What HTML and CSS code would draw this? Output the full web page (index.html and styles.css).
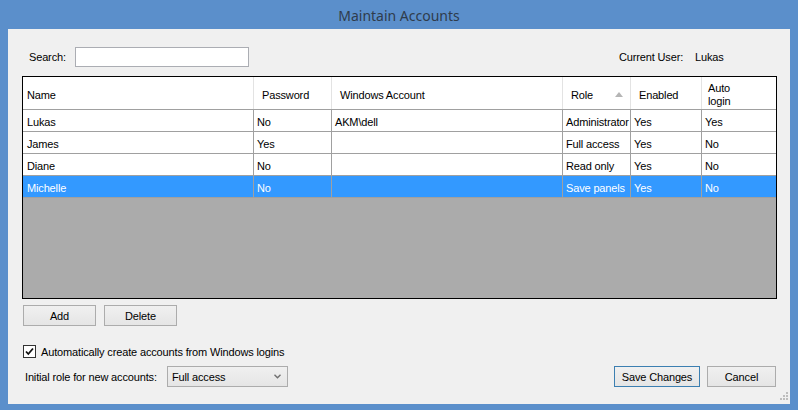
FILE: index.html
```html
<!DOCTYPE html>
<html>
<head>
<meta charset="utf-8">
<link rel="stylesheet" href="styles.css">
</head>
<body>
<div class="window">
  <div class="titlebar">Maintain Accounts</div>
  <div class="client">
    <div class="top-row">
      <span class="search-label">Search:</span>
      <input class="search-input" type="text">
      <span class="user-label">Current User:</span>
      <span class="user-name">Lukas</span>
    </div>
    <div class="grid">
      <div class="row head">
        <div class="cell c-name">Name</div>
        <div class="cell c-pass">Password</div>
        <div class="cell c-win">Windows Account</div>
        <div class="cell c-role">Role<svg class="sort" width="8" height="5" viewBox="0 0 8 5"><path d="M0 5 L4 0 L8 5 Z" fill="#b5b5b5"/></svg></div>
        <div class="cell c-en">Enabled</div>
        <div class="cell c-auto">Auto<br>login</div>
      </div>
      <div class="row">
        <div class="cell c-name">Lukas</div>
        <div class="cell c-pass">No</div>
        <div class="cell c-win">AKM\dell</div>
        <div class="cell c-role">Administrator</div>
        <div class="cell c-en">Yes</div>
        <div class="cell c-auto">Yes</div>
      </div>
      <div class="row">
        <div class="cell c-name">James</div>
        <div class="cell c-pass">Yes</div>
        <div class="cell c-win"></div>
        <div class="cell c-role">Full access</div>
        <div class="cell c-en">Yes</div>
        <div class="cell c-auto">No</div>
      </div>
      <div class="row">
        <div class="cell c-name">Diane</div>
        <div class="cell c-pass">No</div>
        <div class="cell c-win"></div>
        <div class="cell c-role">Read only</div>
        <div class="cell c-en">Yes</div>
        <div class="cell c-auto">No</div>
      </div>
      <div class="row selected">
        <div class="cell c-name">Michelle</div>
        <div class="cell c-pass">No</div>
        <div class="cell c-win"></div>
        <div class="cell c-role">Save panels</div>
        <div class="cell c-en">Yes</div>
        <div class="cell c-auto">No</div>
      </div>
    </div>
    <div class="btn-row">
      <button class="btn btn-add">Add</button>
      <button class="btn btn-del">Delete</button>
    </div>
    <div class="check-row">
      <span class="checkbox"><svg width="11" height="11" viewBox="0 0 11 11"><path d="M2 5.5 L4.3 8 L9 2.5" fill="none" stroke="#111" stroke-width="1.8"/></svg></span>
      <span class="check-label">Automatically create accounts from Windows logins</span>
    </div>
    <div class="bottom-row">
      <span class="role-label">Initial role for new accounts:</span>
      <div class="combo"><span>Full access</span><svg width="7" height="5" viewBox="0 0 7 5"><path d="M0.5 0.8 L3.5 3.8 L6.5 0.8" fill="none" stroke="#707070" stroke-width="1.4"/></svg></div>
      <button class="btn btn-save">Save Changes</button>
      <button class="btn btn-cancel">Cancel</button>
    </div>
    <svg class="grip" width="10" height="10" viewBox="0 0 10 10">
      <rect x="8" y="0" width="2" height="2" fill="#bdbdbd"/>
      <rect x="5" y="3" width="2" height="2" fill="#bdbdbd"/>
      <rect x="8" y="3" width="2" height="2" fill="#bdbdbd"/>
      <rect x="2" y="6" width="2" height="2" fill="#bdbdbd"/>
      <rect x="5" y="6" width="2" height="2" fill="#bdbdbd"/>
      <rect x="8" y="6" width="2" height="2" fill="#bdbdbd"/>
    </svg>
  </div>
</div>
</body>
</html>
```

FILE: styles.css
```css
* { box-sizing: border-box; }
html, body { margin: 0; padding: 0; }
body {
  width: 798px;
  height: 410px;
  background: #5b8fcb;
  font-family: "Liberation Sans", Arial, sans-serif;
  font-size: 11px;
  letter-spacing: -0.15px;
  color: #000;
  overflow: hidden;
}
.window { width: 798px; height: 410px; display: flex; flex-direction: column; }
.titlebar {
  height: 29px;
  display: flex;
  align-items: center;
  justify-content: center;
  font-family: "Noto Sans", "Open Sans", sans-serif;
  font-size: 14px;
  letter-spacing: 0;
  color: #2f3c4c;
  padding-top: 1px;
}
.client {
  position: relative;
  margin: 0 8px;
  height: 375px;
  background: #f0f0f0;
  padding: 18px 13px 0 14px;
}
.top-row { display: flex; align-items: center; height: 20px; padding-left: 7px; }
.search-label { width: 46px; }
.search-input {
  width: 174px;
  height: 20px;
  border: 1px solid #abadb3;
  background: #fff;
  margin: 0;
  padding: 0;
}
.user-label { margin-left: auto; width: 76px; }
.user-name { width: 82px; }
.grid {
  margin-top: 9px;
  height: 223px;
  border: 1px solid #000;
  background: #ababab;
}
.row { display: flex; height: 22px; background: #fff; border-bottom: 1px solid #a0a0a0; }
.row.head { height: 33px; }
.row.selected { background: #3399ff; color: #fff; }
.cell {
  border-right: 1px solid #a0a0a0;
  display: flex;
  align-items: center;
  padding-left: 3px;
  padding-top: 2px;
  white-space: nowrap;
  overflow: hidden;
}
.cell:last-child { border-right: none; }
.head .cell { border-right-color: #e3e3e3; padding-left: 8px; padding-top: 4px; line-height: 13px; }
.head .c-auto { padding-left: 6px; }
.c-name { width: 231px; }
.row .c-name { padding-left: 4px; }
.c-pass { width: 78px; }
.c-win { width: 231px; }
.c-role { width: 68px; }
.c-en { width: 71px; }
.c-auto { width: 74px; }
.head .c-role { justify-content: space-between; padding-right: 7px; }
.sort { margin-top: -2px; }
.btn {
  font-family: inherit;
  font-size: 11px;
  letter-spacing: -0.15px;
  color: #000;
  height: 21px;
  border: 1px solid #acacac;
  background: linear-gradient(#f0f0f0, #e5e5e5);
  margin: 0;
  padding: 0;
}
.btn-row { display: flex; gap: 8px; margin-top: 6px; padding-left: 1px; }
.btn-add, .btn-del { width: 73px; }
.check-row { display: flex; align-items: center; margin-top: 19px; padding-left: 1px; height: 13px; }
.checkbox {
  width: 13px;
  height: 13px;
  border: 1px solid #333;
  background: #fff;
  display: flex;
  align-items: center;
  justify-content: center;
}
.check-label { margin-left: 5px; }
.bottom-row { display: flex; align-items: center; margin-top: 8px; height: 21px; padding-left: 3px; }
.role-label { width: 142px; }
.combo {
  width: 121px;
  height: 21px;
  border: 1px solid #acacac;
  background: linear-gradient(#f0f0f0, #e5e5e5);
  display: flex;
  align-items: center;
  justify-content: space-between;
  padding: 0 6px 0 4px;
}
.btn-save { margin-left: auto; width: 86px; border-color: #3c7fb1; }
.btn-cancel { margin-left: 7px; width: 69px; margin-right: 1px; }
.grip { position: absolute; right: 2px; bottom: 2px; }
```
